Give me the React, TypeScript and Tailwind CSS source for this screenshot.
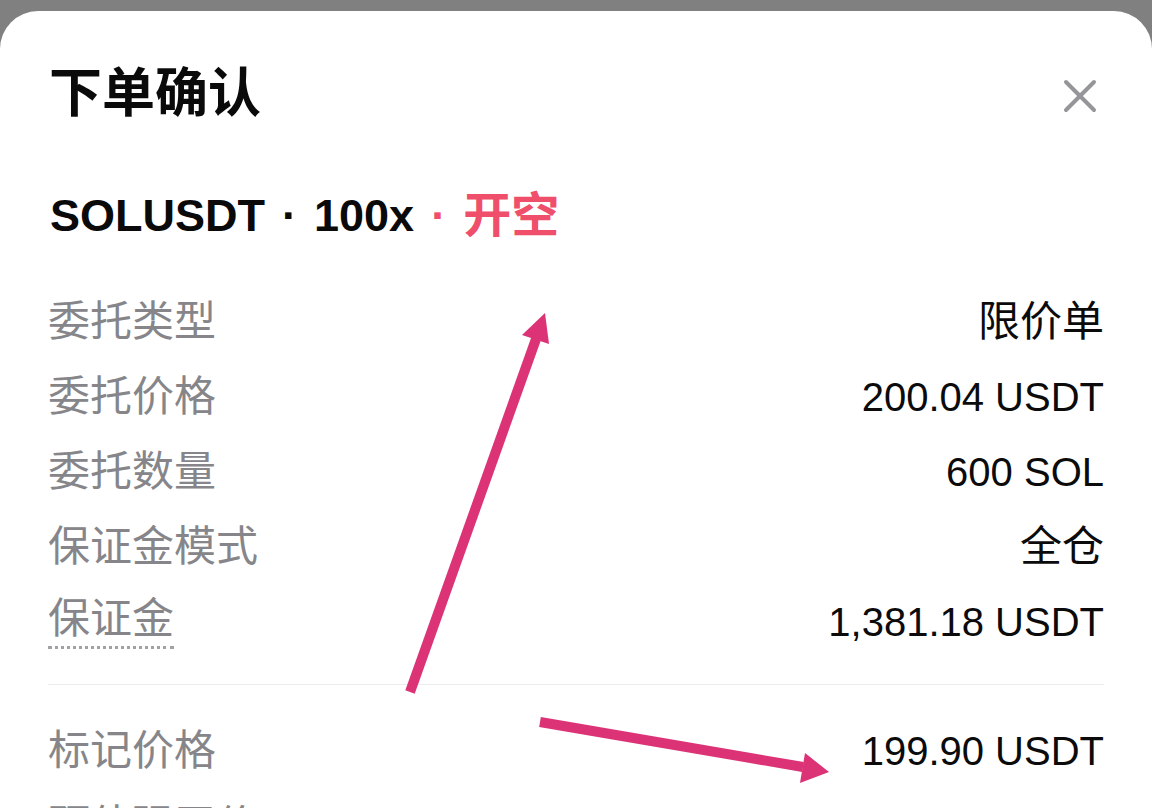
const rows: { label: string; value: string; dotted?: boolean }[] = [
  { label: "委托类型", value: "限价单" },
  { label: "委托价格", value: "200.04 USDT" },
  { label: "委托数量", value: "600 SOL" },
  { label: "保证金模式", value: "全仓" },
  { label: "保证金", value: "1,381.18 USDT", dotted: true },
];

const lowerRows = [
  { label: "标记价格", value: "199.90 USDT" },
  { label: "预估强平价", value: "" },
];

const isCjk = (s: string) => /[\u4e00-\u9fff]/.test(s);

function Row({ label, value, dotted }: { label: string; value: string; dotted?: boolean }) {
  return (
    <div className="flex h-[75px] items-center justify-between">
      <span
        className={
          dotted
            ? "border-b-[3px] border-dotted border-[#a2a2a6] pb-[3px] text-[42px] leading-[48px] text-[#86868a]"
            : "text-[42px] leading-[48px] text-[#86868a]"
        }
      >
        {label}
      </span>
      <span
        className={
          isCjk(value)
            ? "text-[42px] leading-[48px] text-[#0b0b0b]"
            : "text-[40px] leading-[48px] text-[#0b0b0b]"
        }
      >
        {value}
      </span>
    </div>
  );
}

// annotation arrows drawn over the sheet
function Arrows() {
  return (
    <svg
      className="pointer-events-none absolute inset-0"
      width="1152"
      height="808"
      viewBox="0 0 1152 808"
    >
      <line x1="410" y1="692" x2="536" y2="339" stroke="#dc3377" strokeWidth="10" />
      <polygon points="545,313 549,344 522,335" fill="#dc3377" />
      <line x1="540" y1="722" x2="803" y2="767" stroke="#dc3377" strokeWidth="10" />
      <polygon points="829,772 800,783 805,753" fill="#dc3377" />
    </svg>
  );
}

export default function App() {
  return (
    <div
      className="relative h-[808px] w-[1152px] overflow-hidden bg-[#808080]"
      style={{ fontFamily: '"Liberation Sans", "Noto Sans CJK SC", sans-serif' }}
    >
      <div className="mt-[11px] h-[797px] rounded-t-[38px] bg-white px-12">
        <div className="flex items-center justify-between pt-[53px]">
          <h1 className="pl-[1px] text-[53px] font-bold leading-[60px] text-[#0a0a0a]">下单确认</h1>
          <svg className="mr-[7px] mt-[4px]" width="34" height="34" viewBox="0 0 34 34">
            <path d="M3 3 L31 31 M31 3 L3 31" stroke="#96969a" strokeWidth="4" strokeLinecap="round" fill="none" />
          </svg>
        </div>

        <div className="mt-[62px] flex h-[60px] items-center gap-[17px] pl-[2px] text-[45px] font-bold text-[#0a0a0a]">
          <span>SOLUSDT</span>
          <span>·</span>
          <span>100x</span>
          <span className="text-[#ef4f6a]">·</span>
          <span className="text-[48px] text-[#ef4f6a]">开空</span>
        </div>

        <div className="mt-[38px]">
          {rows.map((r) => (
            <Row key={r.label} {...r} />
          ))}
        </div>

        <div className="mt-[25px] mb-[28px] h-px bg-[#ececec]" />

        <div>
          {lowerRows.map((r) => (
            <Row key={r.label} {...r} />
          ))}
        </div>
      </div>
      <Arrows />
    </div>
  );
}
